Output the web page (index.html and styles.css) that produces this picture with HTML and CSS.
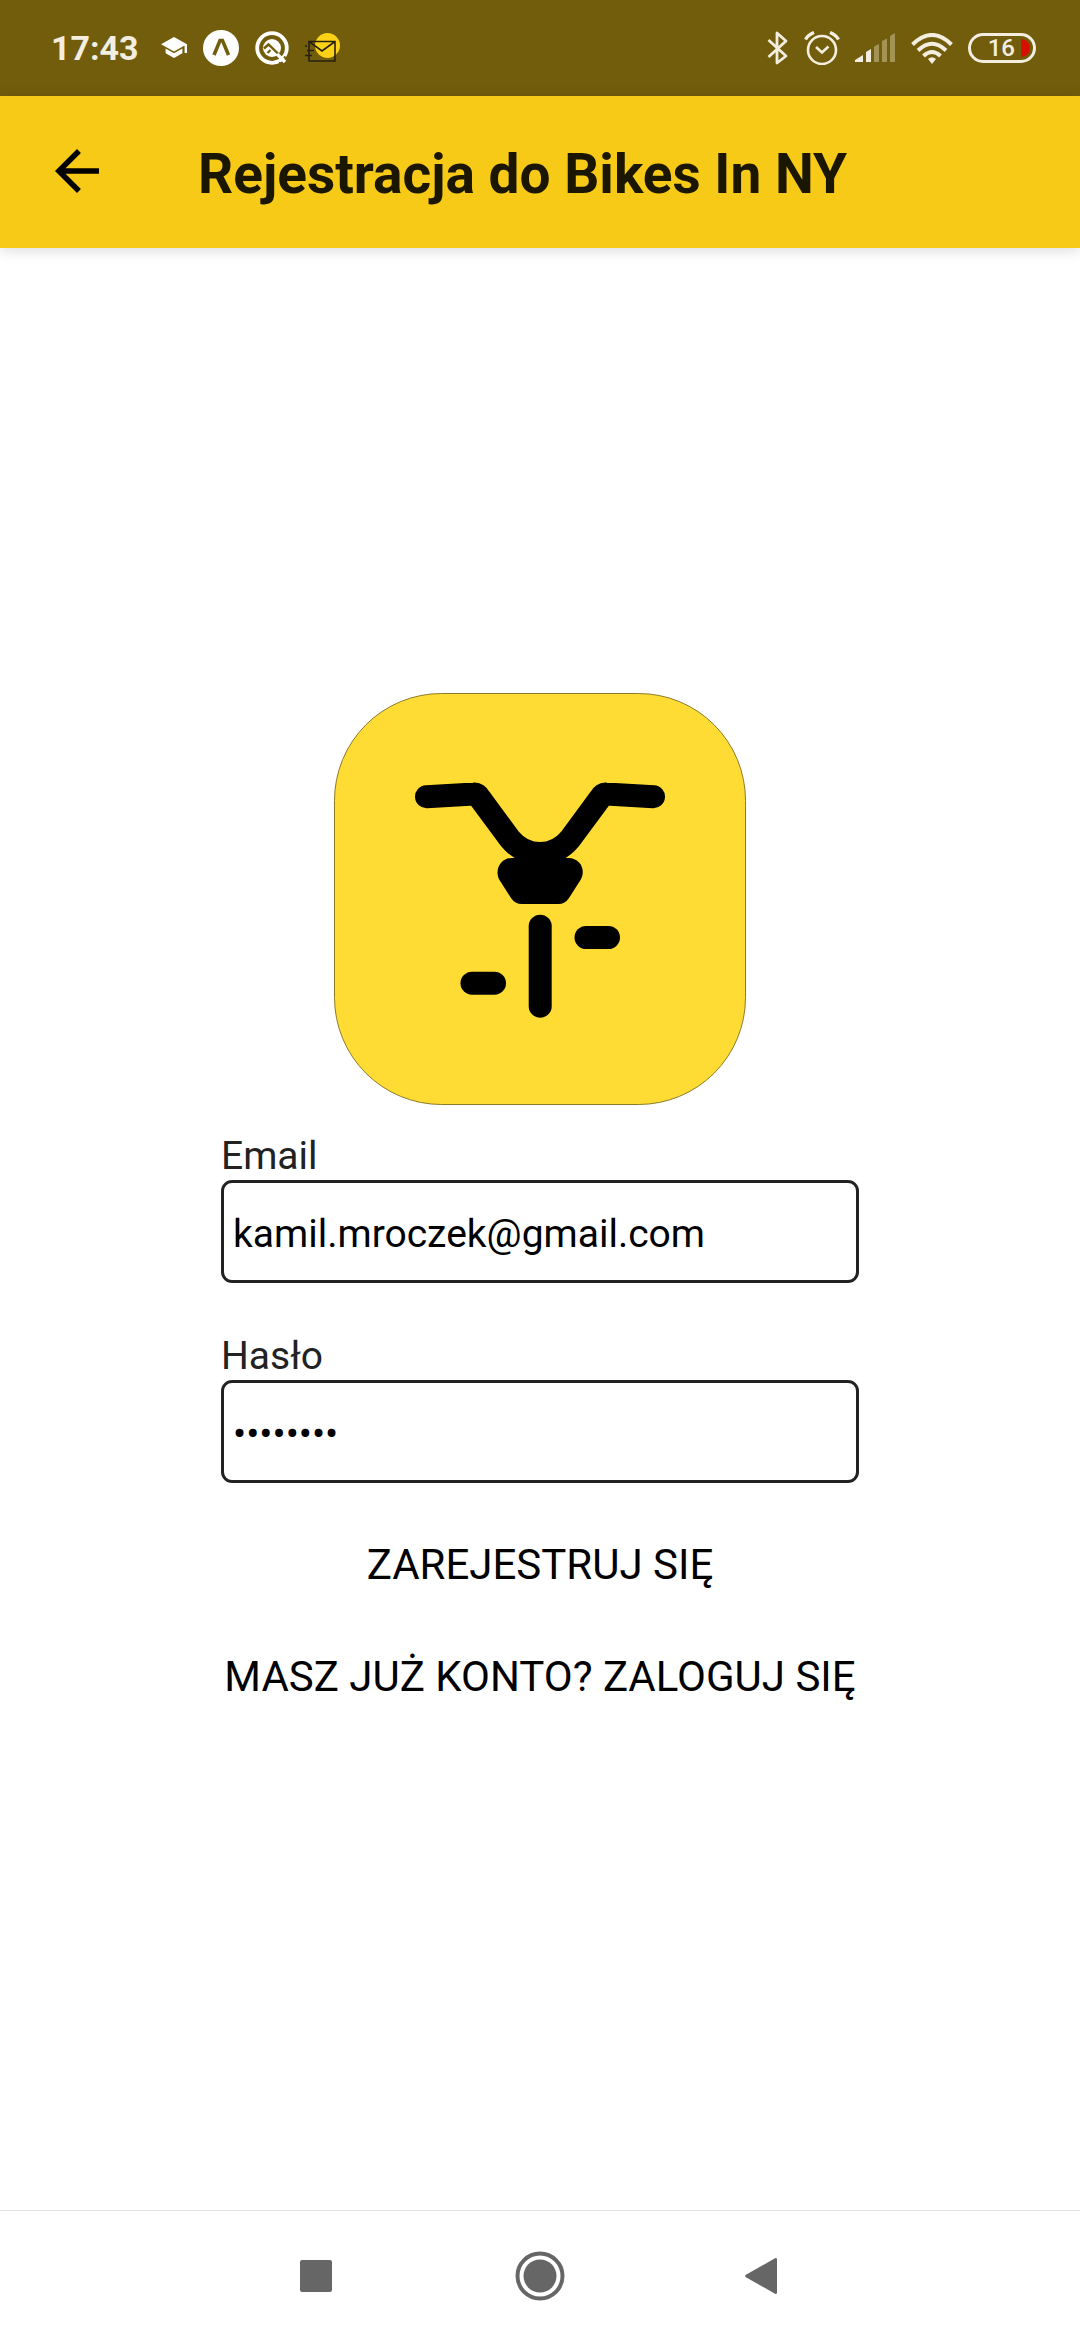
FILE: index.html
```html
<!DOCTYPE html>
<html lang="pl">
<head>
<meta charset="utf-8">
<meta name="viewport" content="width=device-width, initial-scale=1">
<title>Rejestracja do Bikes In NY</title>
<link rel="stylesheet" href="styles.css">
</head>
<body>
<div class="screen">
  <div class="status-bar">
    <div class="status-left">
      <span class="clock">17:43</span>
      <svg class="icon" width="26" height="22" viewBox="0 0 26 22" aria-hidden="true">
        <path fill="#fff" d="M13 0 26 7.2V16H23.6V8.6L13 14.5 0 7.2zM4.6 11.6 13 16.3 21.4 11.6V16.2L13 21 4.6 16.2z"/>
      </svg>
      <svg class="icon" width="36" height="36" viewBox="0 0 36 36" aria-hidden="true">
        <circle cx="18" cy="18" r="18" fill="#fff"/>
        <path d="M11 25 17 10.500H19.500L25.500 25" fill="none" stroke="#725d0c" stroke-width="3.500"/>
      </svg>
      <svg class="icon" width="34" height="34" viewBox="0 0 34 34" aria-hidden="true">
        <circle cx="17" cy="17" r="14.800" fill="none" stroke="#fff" stroke-width="3.800"/>
        <circle cx="17" cy="17" r="9" fill="#fff"/>
        <path d="M9 17.500 13.500 13.500 25 24.500" fill="none" stroke="#725d0c" stroke-width="2.400"/>
        <path d="M12.500 22 15.500 19" stroke="#725d0c" stroke-width="2.200"/>
        <path d="M22 23 30 31" stroke="#fff" stroke-width="3.400"/>
        <path d="M24 31.500 28 34M29 25.500 32 28.500" stroke="#725d0c" stroke-width="2"/>
      </svg>
      <svg class="icon" width="36" height="30" viewBox="0 0 36 30" aria-hidden="true">
        <circle cx="22.500" cy="12.500" r="12.500" fill="#fcd116"/>
        <path d="M4 8.500H30V28H4zM4 8.500 17 18 30 8.500M2 17.500H9M0 22.500H7M0 13H2" fill="none" stroke="#26210f" stroke-width="1.600"/>
      </svg>
    </div>
    <div class="status-right">
      <svg class="icon" width="22" height="34" viewBox="0 0 22 34" aria-hidden="true">
        <path d="M1.500 9 19 25 10 32V2L19 10 1.500 26" fill="none" stroke="#f3eee0" stroke-width="2.800" stroke-linejoin="round"/>
      </svg>
      <svg class="icon" width="36" height="34" viewBox="0 0 36 34" aria-hidden="true">
        <g fill="none" stroke="#f3eee0" stroke-width="2.600">
          <circle cx="18" cy="19" r="14"/>
          <path d="M12 16 18 21.500 24.500 15.500"/>
          <path stroke-width="3.400" d="M1.500 8.500Q4 4 10 1.500M26 1.500Q32 4 34.500 8.500"/>
        </g>
      </svg>
      <svg class="icon" width="41" height="30" viewBox="0 0 41 30" aria-hidden="true">
        <path fill="#f3eee0" d="M0 29V27L8 22V29zM11 29V19L16 16V29z"/>
        <path fill="#a39355" d="M19 29V13.500L24 11V29zM27 29V8L32 5.500V29zM35 29V3L40 0V29z"/>
      </svg>
      <svg class="icon" width="42" height="31" viewBox="0 0 42 31" aria-hidden="true">
        <g fill="none" stroke="#f3eee0" stroke-width="4">
          <path d="M1.500 11.500Q21-7.500 40.500 11.500"/>
          <path d="M7 17.500Q21 4 35 17.500"/>
          <path d="M12.500 23Q21 15 29.500 23"/>
        </g>
        <path fill="#f3eee0" d="M17 26Q21 22.500 25 26L21 31z"/>
      </svg>
      <div class="battery">
        <span>16</span>
        <svg width="9" height="18" viewBox="0 0 9 18" aria-hidden="true"><path fill="#d80f00" d="M0 0C5 0 9 4 9 9S5 18 0 18z"/></svg>
      </div>
    </div>
  </div>

  <header class="app-bar">
    <button class="back" type="button" aria-label="Wstecz">
      <svg width="66" height="66" viewBox="0 0 24 24" aria-hidden="true"><path d="M20 11H7.830l5.590-5.590L12 4l-8 8 8 8 1.410-1.410L7.830 13H20v-2z"/></svg>
    </button>
    <h1>Rejestracja do Bikes In NY</h1>
  </header>

  <main class="content">
    <svg class="logo" width="412" height="412" viewBox="0 0 412 412" role="img" aria-label="Bikes In NY">
      <rect x="0.500" y="0.500" width="411" height="411" rx="107" fill="#ffdc34" stroke="#8d7b28"/>
      <path d="M92.500 103.700 140 101Q143.500 100.700 146 105.400L176 146Q188 160.500 206 160.500T236 146L266 105.400Q268.500 100.700 272 101L319.500 103.700" fill="none" stroke="#000" stroke-width="23" stroke-linecap="round" stroke-linejoin="round"/>
      <path d="M178 165H234.500C246 165 252.500 177 246.500 187L235 205Q231 211 224.500 211H188Q181 211 177 205L165.500 187C160 177 166.500 165 178 165z"/>
      <rect x="194.700" y="221.700" width="23" height="103" rx="11.500"/>
      <rect x="240.500" y="233" width="45.500" height="23" rx="11.500"/>
      <rect x="126.500" y="278.700" width="45.500" height="23" rx="11.500"/>
    </svg>
    <form class="form">
      <div class="field">
        <label for="email">Email</label>
        <input id="email" type="email" value="kamil.mroczek@gmail.com">
      </div>
      <div class="field">
        <label for="password">Hasło</label>
        <input id="password" type="password" value="password">
      </div>
      <div class="actions">
        <button type="button">ZAREJESTRUJ SIĘ</button>
        <button type="button">MASZ JUŻ KONTO? ZALOGUJ SIĘ</button>
      </div>
    </form>
  </main>

  <nav class="nav-bar">
    <button type="button" aria-label="Ostatnie aplikacje">
      <svg width="50" height="50" viewBox="0 0 50 50" aria-hidden="true"><rect x="9" y="9" width="32" height="32" rx="2"/></svg>
    </button>
    <button type="button" aria-label="Ekran główny">
      <svg width="50" height="50" viewBox="0 0 50 50" aria-hidden="true"><circle cx="25" cy="25" r="22.500" fill="none" stroke="#666" stroke-width="4"/><circle cx="25" cy="25" r="16.500"/></svg>
    </button>
    <button type="button" aria-label="Wstecz">
      <svg width="50" height="50" viewBox="0 0 50 50" aria-hidden="true"><path d="M7 23.800 36 7.200Q38 6.500 38 8.500V41.500Q38 43.500 36 42.800L7 26.200Q5 25 7 23.800z"/></svg>
    </button>
  </nav>
</div>
</body>
</html>
```

FILE: styles.css
```css
* {
  box-sizing: border-box;
}

body {
  margin: 0;
  font-family: Roboto, "Noto Sans", sans-serif;
  background: #fff;
}

button {
  border: 0;
  padding: 0;
  background: none;
  font: inherit;
  color: inherit;
}

svg {
  display: block;
  flex: none;
}

.screen {
  display: flex;
  flex-direction: column;
  min-height: 100vh;
}

.status-bar {
  display: flex;
  justify-content: space-between;
  height: 96px;
  padding: 0 44px 0 51px;
  background: #725d0c;
}

.status-left,
.status-right {
  display: flex;
  align-items: center;
}

.status-left {
  gap: 16px;
}

.status-right {
  gap: 15px;
}

.clock {
  margin-right: 6px;
  font-size: 34px;
  font-weight: 700;
  color: #f3eee0;
}

.battery {
  display: flex;
  align-items: center;
  justify-content: flex-end;
  gap: 6px;
  width: 68px;
  height: 30px;
  padding-right: 3px;
  border: 3px solid #f3eee0;
  border-radius: 15px;
  font-size: 24px;
  font-weight: 500;
  line-height: 24px;
  color: #f3eee0;
}

.app-bar {
  display: flex;
  align-items: center;
  gap: 88px;
  height: 152px;
  padding: 0 44px 2px;
  background: #f7ca18;
  box-shadow: 0 2px 14px rgba(0, 0, 0, 0.15);
}

.app-bar h1 {
  margin: 6px 0 0;
  font-size: 55px;
  font-weight: 700;
  line-height: 64px;
  color: #1a1600;
}

.content {
  display: flex;
  flex: 1;
  flex-direction: column;
  align-items: center;
  justify-content: center;
  gap: 28px;
  padding-bottom: 32px;
}

.form {
  display: flex;
  flex-direction: column;
  gap: 50px;
}

.field {
  display: flex;
  flex-direction: column;
  width: 638px;
}

.field label {
  font-size: 39px;
  line-height: 47px;
  color: #222;
}

.field input {
  height: 103px;
  padding: 4px 9px 0;
  border: 3px solid #222;
  border-radius: 11px;
  background: #fff;
  font: inherit;
  font-size: 39px;
  color: #000;
  outline: 0;
}

.actions {
  display: flex;
  flex-direction: column;
  align-items: center;
  margin-top: -24px;
}

.actions button {
  font-size: 42px;
  line-height: 112px;
  color: #000;
  white-space: nowrap;
}

.nav-bar {
  display: flex;
  justify-content: center;
  gap: 174px;
  height: 130px;
  border-top: 1px solid #e3e3e3;
}

.nav-bar svg {
  fill: #666;
}
```
